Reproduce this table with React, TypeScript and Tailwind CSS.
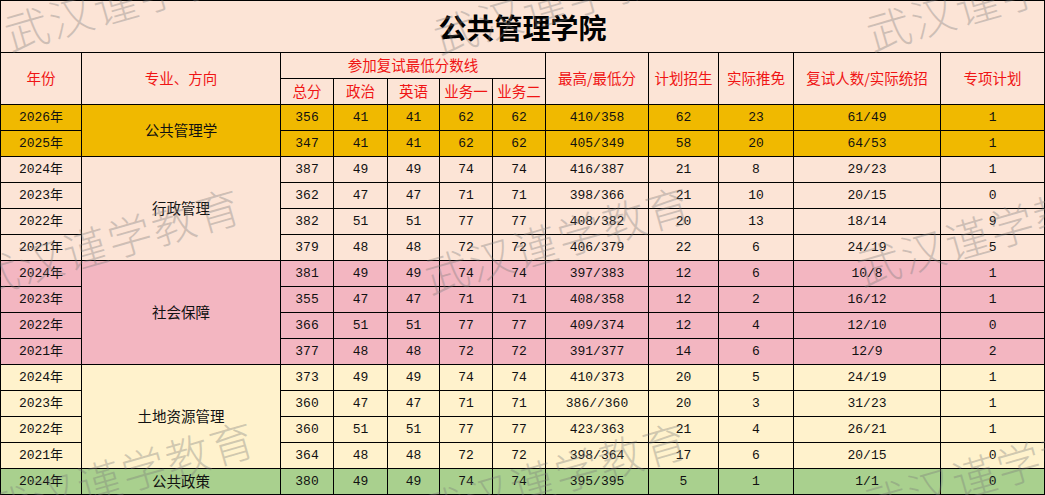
type Group = { name: string; bg: string; rows: string[][] };

const groups: Group[] = [
  {
    name: "公共管理学",
    bg: "bg-[#f0b900]",
    rows: [
      ["2026年", "356", "41", "41", "62", "62", "410/358", "62", "23", "61/49", "1"],
      ["2025年", "347", "41", "41", "62", "62", "405/349", "58", "20", "64/53", "1"],
    ],
  },
  {
    name: "行政管理",
    bg: "bg-[#fce4d6]",
    rows: [
      ["2024年", "387", "49", "49", "74", "74", "416/387", "21", "8", "29/23", "1"],
      ["2023年", "362", "47", "47", "71", "71", "398/366", "21", "10", "20/15", "0"],
      ["2022年", "382", "51", "51", "77", "77", "408/382", "20", "13", "18/14", "9"],
      ["2021年", "379", "48", "48", "72", "72", "406/379", "22", "6", "24/19", "5"],
    ],
  },
  {
    name: "社会保障",
    bg: "bg-[#f3b6c1]",
    rows: [
      ["2024年", "381", "49", "49", "74", "74", "397/383", "12", "6", "10/8", "1"],
      ["2023年", "355", "47", "47", "71", "71", "408/358", "12", "2", "16/12", "1"],
      ["2022年", "366", "51", "51", "77", "77", "409/374", "12", "4", "12/10", "0"],
      ["2021年", "377", "48", "48", "72", "72", "391/377", "14", "6", "12/9", "2"],
    ],
  },
  {
    name: "土地资源管理",
    bg: "bg-[#fff2cc]",
    rows: [
      ["2024年", "373", "49", "49", "74", "74", "410/373", "20", "5", "24/19", "1"],
      ["2023年", "360", "47", "47", "71", "71", "386//360", "20", "3", "31/23", "1"],
      ["2022年", "360", "51", "51", "77", "77", "423/363", "21", "4", "26/21", "1"],
      ["2021年", "364", "48", "48", "72", "72", "398/364", "17", "6", "20/15", "0"],
    ],
  },
  {
    name: "公共政策",
    bg: "bg-[#a9d08e]",
    rows: [["2024年", "380", "49", "49", "74", "74", "395/395", "5", "1", "1/1", "0"]],
  },
];

// watermark spots, measured off the screenshot
const marks = [
  "left-[5px] top-[11px]",
  "left-[434px] top-[14px]",
  "left-[867px] top-[11px]",
  "left-[-25px] top-[256px]",
  "left-[425px] top-[254px]",
  "left-[857px] top-[246px]",
  "left-[-11px] top-[489px]",
  "left-[422px] top-[490px]",
  "left-[864px] top-[484px]",
];

const cell = "border border-black p-0 h-[26px] text-center align-middle";
const head = `${cell} text-[#f01414] text-[14.5px] font-['Noto_Sans_CJK_SC',sans-serif]`;
const num = `${cell} text-[13px] text-[#111] font-['Liberation_Mono','Noto_Sans_CJK_SC',monospace]`;

export default function App() {
  return (
    <div className="relative w-[1045px] h-[495px] overflow-hidden bg-white">
      <table className="table-fixed border-collapse w-[1044px] leading-none">
        <colgroup>
          <col className="w-[81px]" />
          <col className="w-[199px]" />
          <col className="w-[53px]" />
          <col className="w-[54px]" />
          <col className="w-[52px]" />
          <col className="w-[53px]" />
          <col className="w-[53px]" />
          <col className="w-[103px]" />
          <col className="w-[70px]" />
          <col className="w-[75px]" />
          <col className="w-[147px]" />
          <col className="w-[104px]" />
        </colgroup>
        <tbody>
          <tr className="bg-[#fce4d6]">
            <td
              colSpan={12}
              className="border border-black h-[52px] p-0 text-center text-[28px] font-bold text-black font-['Noto_Sans_CJK_SC',sans-serif]"
            >
              公共管理学院
            </td>
          </tr>
          <tr className="bg-[#fce4d6]">
            <td rowSpan={2} className={head}>年份</td>
            <td rowSpan={2} className={head}>专业、方向</td>
            <td colSpan={5} className={head}>参加复试最低分数线</td>
            <td rowSpan={2} className={head}>最高/最低分</td>
            <td rowSpan={2} className={head}>计划招生</td>
            <td rowSpan={2} className={head}>实际推免</td>
            <td rowSpan={2} className={head}>复试人数/实际统招</td>
            <td rowSpan={2} className={head}>专项计划</td>
          </tr>
          <tr className="bg-[#fce4d6]">
            <td className={head}>总分</td>
            <td className={head}>政治</td>
            <td className={head}>英语</td>
            <td className={head}>业务一</td>
            <td className={head}>业务二</td>
          </tr>
          {groups.map((g) =>
            g.rows.map((r, i) => (
              <tr key={g.name + i} className={g.bg}>
                <td className={num}>{r[0]}</td>
                {i === 0 && (
                  <td
                    rowSpan={g.rows.length}
                    className="border border-black p-0 text-center align-middle text-[14.5px] text-[#111] font-['Noto_Sans_CJK_SC',sans-serif]"
                  >
                    {g.name}
                  </td>
                )}
                {r.slice(1).map((v, j) => (
                  <td key={j} className={num}>{v}</td>
                ))}
              </tr>
            ))
          )}
        </tbody>
      </table>

      <div className="absolute inset-0 pointer-events-none">
        {marks.map((m) => (
          <span
            key={m}
            className={`absolute ${m} whitespace-nowrap origin-left -rotate-[16deg] text-[44px] leading-[44px] tracking-[2px] font-light text-[rgba(120,120,120,0.34)] font-['Noto_Sans_CJK_SC',sans-serif]`}
          >
            武汉谨学教育
          </span>
        ))}
      </div>
    </div>
  );
}
